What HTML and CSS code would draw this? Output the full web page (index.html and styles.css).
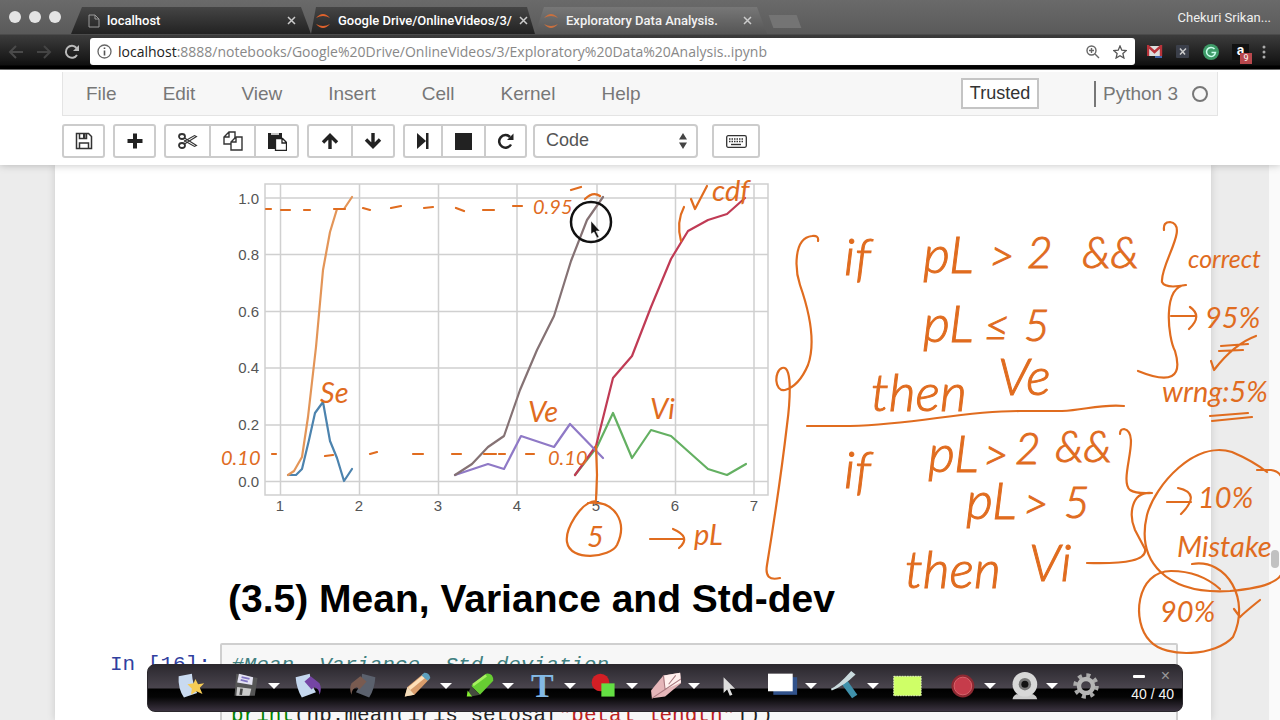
FILE: index.html
```
<!DOCTYPE html>
<html lang="en">
<head>
    <meta charset="UTF-8">
    <meta name="viewport" content="width=device-width, initial-scale=1.0">
    <title>Exploratory Data Analysis.</title>
    <link rel="stylesheet" href="styles.css">
</head>
<body>

<header class="browser">
    <div class="tabs">
        <div class="lights"><i></i><i></i><i></i></div>
        <div class="tab first">
            <svg width="12" height="14" viewBox="0 0 12 14"><path d="M1 1h6l4 4v8H1zM7 1v4h4" fill="none" stroke="#999"/></svg>
            <span>localhost</span>
            <button class="close" aria-label="Close tab"><svg width="9" height="9" viewBox="0 0 9 9"><path d="M1 1l7 7M8 1L1 8" stroke="#ccc" stroke-width="1.500"/></svg></button>
        </div>
        <div class="tab second">
            <svg width="16" height="16" viewBox="0 0 16 16" fill="#e0622c"><path d="M1 5Q8-3 15 5Q8 1 1 5zM1 11Q8 19 15 11Q8 15 1 11z"/></svg>
            <span>Google Drive/OnlineVideos/3/</span>
            <button class="close" aria-label="Close tab"><svg width="9" height="9" viewBox="0 0 9 9"><path d="M1 1l7 7M8 1L1 8" stroke="#ccc" stroke-width="1.500"/></svg></button>
        </div>
        <div class="tab active">
            <svg width="16" height="16" viewBox="0 0 16 16" fill="#c9703f"><path d="M1 5Q8-3 15 5Q8 1 1 5zM1 11Q8 19 15 11Q8 15 1 11z"/></svg>
            <span>Exploratory Data Analysis.</span>
            <button class="close" aria-label="Close tab"><svg width="9" height="9" viewBox="0 0 9 9"><path d="M1 1l7 7M8 1L1 8" stroke="#ccc" stroke-width="1.500"/></svg></button>
        </div>
        <button class="newtab" aria-label="New tab"></button>
        <span class="profile">Chekuri Srikan...</span>
    </div>
    <div class="navbar">
        <button class="nav" aria-label="Back"><svg width="16" height="14" viewBox="0 0 16 14"><path d="M15 7H2M8 1L2 7l6 6" fill="none" stroke="#4a4a4a" stroke-width="2"/></svg></button>
        <button class="nav" aria-label="Forward"><svg width="16" height="14" viewBox="0 0 16 14"><path d="M1 7h13M8 1l6 6-6 6" fill="none" stroke="#444" stroke-width="2"/></svg></button>
        <button class="nav" aria-label="Reload"><svg width="16" height="16" viewBox="0 0 16 16"><path d="M13 11A6 6 0 1 1 12.500 4" fill="none" stroke="#bbb" stroke-width="2"/><path d="M15 1v6H9z" fill="#bbb"/></svg></button>
        <div class="address">
            <svg width="15" height="15" viewBox="0 0 15 15"><circle cx="7.500" cy="7.500" r="6.500" fill="none" stroke="#666" stroke-width="1.300"/><path d="M7.500 6.500v5M7.500 3.500v1.600" stroke="#555" stroke-width="1.600"/></svg>
            <span class="url"><b>localhost</b>:8888/notebooks/Google%20Drive/OnlineVideos/3/Exploratory%20Data%20Analysis..ipynb</span>
            <svg width="14" height="14" viewBox="0 0 14 14" fill="none" stroke="#666" stroke-width="1.400"><circle cx="5.500" cy="5.500" r="4.500"/><path d="M9 9l4 4M3 5.500h5M5.500 3v5"/></svg>
            <svg width="14" height="14" viewBox="0 0 14 14"><path d="M7 1l1.800 4.200 4.500.4-3.400 3 1 4.400L7 10.700 3.100 13l1-4.400-3.400-3 4.500-.4z" fill="none" stroke="#555" stroke-width="1.300"/></svg>
        </div>
        <div class="extensions">
            <svg width="16" height="14" viewBox="0 0 16 14"><path d="M1 1h13v10H1z" fill="#ddd"/><path d="M1 11V1l6.500 6L14 1v10" fill="none" stroke="#b8333a" stroke-width="2.400"/><path d="M8 11h7v2H8z" fill="#46a"/></svg>
            <svg width="14" height="14" viewBox="0 0 14 14"><rect width="13" height="13" rx="1" fill="#3b3f4a"/><path d="M4 3.500l5 6M10 3.500l-6 6" stroke="#ccc" stroke-width="1.500"/></svg>
            <svg width="16" height="16" viewBox="0 0 16 16"><circle cx="8" cy="8" r="8" fill="#3e9b68"/><path d="M11.500 5A4.500 4.500 0 1 0 12.500 8.500H8.500" fill="none" stroke="#cfe" stroke-width="1.500"/></svg>
            <div class="amazon">a<span class="badge">9</span></div>
            <svg width="4" height="14" viewBox="0 0 4 14" fill="#aaa"><circle cx="2" cy="2" r="1.500"/><circle cx="2" cy="7" r="1.500"/><circle cx="2" cy="12" r="1.500"/></svg>
        </div>
    </div>
</header>

<div class="jupyter">
    <nav class="menubar">
        <a href="#">File</a>
        <a href="#">Edit</a>
        <a href="#">View</a>
        <a href="#">Insert</a>
        <a href="#">Cell</a>
        <a href="#">Kernel</a>
        <a href="#">Help</a>
        <button class="trusted">Trusted</button>
        <span class="kernel">Python 3</span>
        <i class="idle"></i>
    </nav>
    <div class="toolbar">
        <div class="group"><button class="w43" aria-label="Save"><svg width="18" height="18" viewBox="0 0 18 18"><path d="M1.500 1.500h12l3 3v12h-15zM4.500 1.500v5h7v-5M4.500 16.500v-5.500h9v5.500" fill="none" stroke="#333" stroke-width="1.500"/><path d="M8 2h2.500v4H8z" fill="#333"/></svg></button></div>
        <div class="group"><button class="w43" aria-label="Insert cell"><svg width="16" height="16" viewBox="0 0 16 16"><path d="M8 .5v15M.5 8h15" stroke="#222" stroke-width="4"/></svg></button></div>
        <div class="group">
            <button class="w45" aria-label="Cut"><svg width="20" height="18" viewBox="0 0 20 18" fill="none" stroke="#333"><ellipse cx="4" cy="4.500" rx="3" ry="2.500" stroke-width="1.800"/><ellipse cx="4" cy="13.500" rx="3" ry="2.500" stroke-width="1.800"/><path d="M6.500 6l12 7.500-2 1L6 8.500M6.500 12l12-7.500-2-1L6 9.500" stroke-width="1.100"/></svg></button>
            <button class="w45" aria-label="Copy"><svg width="20" height="20" viewBox="0 0 20 20" fill="#fff" stroke="#333" stroke-width="1.400"><path d="M6 1h6v12H1V6zM6 1v5H1"/><path d="M13 6h6v13H8v-8zM13 6v5H8"/></svg></button>
            <button class="w45" aria-label="Paste"><svg width="20" height="20" viewBox="0 0 20 20"><path d="M1 2h14v16H1z" fill="#222"/><path d="M4 3h8" stroke="#fff" stroke-width="1.500"/><path d="M8.500 7.500h7l4 4v8h-11zM15 7.500v4.500h4.500" fill="#fff" stroke="#222" stroke-width="1.300"/></svg></button>
        </div>
        <div class="group">
            <button class="w44" aria-label="Move up"><svg width="18" height="16" viewBox="0 0 18 16"><path d="M9 16V3M2 9.500L9 2.500l7 7" fill="none" stroke="#222" stroke-width="3.400"/></svg></button>
            <button class="w44" aria-label="Move down"><svg width="18" height="16" viewBox="0 0 18 16"><path d="M9 0v13M2 6.500l7 7 7-7" fill="none" stroke="#222" stroke-width="3.400"/></svg></button>
        </div>
        <div class="group">
            <button class="w38" aria-label="Run"><svg width="12" height="16" viewBox="0 0 12 16"><path d="M0 0l9 8-9 8zM9 0h2.500v16H9z" fill="#222"/></svg></button>
            <button class="w43" aria-label="Stop"><svg width="17" height="17" viewBox="0 0 17 17"><path d="M0 0h17v17H0z" fill="#222"/></svg></button>
            <button class="w43" aria-label="Restart"><svg width="17" height="17" viewBox="0 0 17 17"><path d="M14 11.500A6.300 6.300 0 1 1 13 4" fill="none" stroke="#222" stroke-width="2.500"/><path d="M16.500.5v6.500H10z" fill="#222"/></svg></button>
        </div>
        <div class="celltype">
            <select aria-label="Cell type"><option>Code</option><option>Markdown</option></select>
            <svg width="8" height="16" viewBox="0 0 8 16"><path d="M0 6.500L4 0l4 6.500zM0 9.500h8L4 16z" fill="#444"/></svg>
        </div>
        <button class="keys" aria-label="Command palette"><svg width="21" height="13" viewBox="0 0 21 13"><rect x=".7" y=".7" width="19.600" height="11.600" rx="1.500" fill="none" stroke="#333" stroke-width="1.300"/><path d="M3 4h15M3 6.500h15" stroke="#333" stroke-width="1.400" stroke-dasharray="1.500 1"/><path d="M5 9.500h10" stroke="#333" stroke-width="1.400"/></svg></button>
    </div>
</div>

<main class="site">
    <div class="notebook">
        <!-- pdf / cdf of petal length -->
        <svg class="plot" width="560" height="350" viewBox="220 170 560 350">
            <g fill="none" stroke="#d0d0d0" stroke-width="1.500">
                <path d="M265 184H768V495H265z"/>
                <path d="M280.500 184V495M359.500 184V495M438.500 184V495M517 184V495M597 184V495M675.500 184V495M754 184V495"/>
                <path d="M265 198H768M265 254.500H768M265 311.500H768M265 368H768M265 425H768M265 481.500H768"/>
            </g>
            <g class="ticks" text-anchor="end">
                <text x="259" y="204">1.0</text>
                <text x="259" y="260">0.8</text>
                <text x="259" y="317">0.6</text>
                <text x="259" y="373">0.4</text>
                <text x="259" y="430">0.2</text>
                <text x="259" y="487">0.0</text>
            </g>
            <g class="ticks" text-anchor="middle">
                <text x="280" y="511">1</text>
                <text x="359" y="511">2</text>
                <text x="438" y="511">3</text>
                <text x="517" y="511">4</text>
                <text x="596" y="511">5</text>
                <text x="675" y="511">6</text>
                <text x="754" y="511">7</text>
            </g>
            <g fill="none" stroke-width="2.200" stroke-linejoin="round" stroke-linecap="round">
                <path stroke="#4c83ae" d="M288 475H296L302 469L309 440L315 413L323 402L330 441L337 458L344 481L352 469"/>
                <path stroke="#e39558" d="M288 475L294 471L302 457L308 417L316 347L323 270L330 232L337 209H344L352 197"/>
                <path stroke="#64b062" d="M575 475L597 447L613 413L632 458L651 430L671 436L708 469L727 475L746 464"/>
                <path stroke="#c03b55" d="M575 475L596 446L613 378L632 356L651 307L671 259L688 231L708 220L727 214L745 198"/>
                <path stroke="#8f79c6" d="M455 475L488 464L504 469L521 436L554 447L570 424L603 458"/>
                <path stroke="#857274" d="M455 475L472 464L488 447L504 436L520 390L537 350L554 316L571 261L587 220L603 197"/>
            </g>
        </svg>
        <h2>(3.5) Mean, Variance and Std-dev</h2>
        <div class="cell">
            <div class="prompt">In [16]:</div>
<pre class="input"><i>#Mean, Variance, Std-deviation</i>
<b>print</b>("Means:")
<b>print</b>(np.mean(iris_setosa[<em>"petal_length"</em>]))</pre>
        </div>
    </div>
    <div class="scrollbar"><i></i></div>
</main>

<!-- pen layer over the notebook -->
<svg class="ink" width="1280" height="720" viewBox="0 0 1280 720">
    <g class="pen">
        <path d="M266 209h5M281 210h9M304 210h6M334 209h11M363 208l7 2M391 208l10-2M424 208l9-1M456 208l8 3M483 210h11M513 206h9M571 190l10-3M585 199q8-8 15-3"/>
        <path d="M272 454h4M325 456l8-1M370 454l7-2M413 454h10M452 454h9M484 454h12M499 454h6M526 454h8"/>
        <path d="M596 446L597 475L596 500M596 501C580 502 565 530 567 542C570 562 610 558 617 545C628 522 615 500 588 503"/>
        <path d="M650 539H684M673 529Q692 537 679 548"/>
        <path d="M681 241Q676 222 684 207M691 199L695 209L707 186"/>
        <path d="M818 241Q819 235 812 236C793 238 795 270 800 285C814 325 814 348 808 365Q799 386 785 390C774 392 774 371 782 368C794 364 789 410 787 425Q780 485 767 565Q764 582 780 578"/>
        <path d="M807 426H850C920 424 960 411 1020 411H1062C1085 410 1100 404 1124 406"/>
        <path d="M1164 230Q1163 222 1170 222C1190 225 1160 265 1162 282Q1165 289 1186 285C1162 286 1168 338 1175 351Q1187 391 1138 371M1171 316H1195M1190 307Q1203 316 1189 329"/>
        <path d="M1221 346L1248 344M1219 351L1243 350M1211 361L1214 370Q1234 344 1256 336M1210 416L1248 413M1212 421L1252 417"/>
        <path d="M1120 434Q1120 429 1124 429C1142 433 1118 480 1130 490Q1136 494 1152 493C1130 491 1129 516 1135 530L1145 549Q1148 565 1087 563"/>
        <path d="M1257 470H1271Q1279 471 1282 478M1267 472Q1253 461 1232 452C1195 440 1155 485 1147 515C1136 561 1166 595 1230 591Q1277 587 1282 573"/>
        <path d="M1167 502H1191M1178 488Q1202 493 1181 514"/>
        <path d="M1220 589Q1200 571 1171 571C1136 571 1131 622 1150 641C1166 659 1216 656 1233 637C1251 600 1227 558 1192 564M1234 609L1240 617Q1245 612 1260 600"/>
    </g>
    <g class="words">
        <text class="m" x="320" y="403">Se</text>
        <text class="s" x="221" y="465">0.10</text>
        <text class="s" x="548" y="465">0.10</text>
        <text class="s" x="533" y="214">0.95</text>
        <text class="m" x="528" y="422">Ve</text>
        <text class="m" x="650" y="419">Vi</text>
        <text class="m" x="712" y="201">cdf</text>
        <text class="m" x="587" y="547">5</text>
        <text class="m" x="694" y="545">pL</text>
        <text class="xl" x="844" y="275">if</text>
        <text class="xl" x="923" y="273">pL</text>
        <text class="l" x="989" y="271">&gt;</text>
        <text class="l" x="1027" y="268">2</text>
        <text class="l" x="1082" y="268">&amp;&amp;</text>
        <text class="xl" x="923" y="342">pL</text>
        <text class="l" x="984" y="341">≤</text>
        <text class="l" x="1024" y="341">5</text>
        <text class="xl" x="871" y="411">then</text>
        <text class="xl" x="998" y="395">Ve</text>
        <text class="xl" x="844" y="488">if</text>
        <text class="xl" x="928" y="472">pL</text>
        <text class="l" x="983" y="470">&gt;</text>
        <text class="l" x="1015" y="464">2</text>
        <text class="l" x="1055" y="462">&amp;&amp;</text>
        <text class="xl" x="966" y="519">pL</text>
        <text class="l" x="1023" y="519">&gt;</text>
        <text class="l" x="1064" y="518">5</text>
        <text class="xl" x="905" y="588">then</text>
        <text class="xl" x="1029" y="581">Vi</text>
        <text class="r" x="1188" y="268">correct</text>
        <text class="m" x="1205" y="328">95%</text>
        <text class="m" x="1162" y="402">wrng:5%</text>
        <text class="m" x="1198" y="508">10%</text>
        <text class="m" x="1177" y="557">Mistake</text>
        <text class="m" x="1160" y="622">90%</text>
    </g>
    <circle cx="591" cy="222" r="20" fill="none" stroke="#111" stroke-width="2.500"/>
    <path d="M591 221v13l3-2 3 6 2-1-3-6h4z" fill="#111" stroke="#fff" stroke-width=".5"/>
</svg>

<div class="palette">
    <button class="tool" aria-label="New page"><svg width="34" height="34" viewBox="0 0 34 34"><path d="M3 6l15-3q1 12 6 22L9 30Q2 20 3 6z" fill="#c9daf0"/><path d="M22 9l3 6 7-1-5 5 3 7-7-3-6 4 1-7-5-5 7-1z" fill="#f7cc55"/></svg></button>
    <button class="tool more" aria-label="Save"><svg width="34" height="34" viewBox="0 0 34 34"><path d="M6 3l24 5-3 20H4z" fill="#555"/><path d="M9 3l16 4-1 9L7 13z" fill="#e4e3f2"/><path d="M12 7l9 2M11 10l8 2" stroke="#8275c2" stroke-width="2"/><path d="M7 18l16 2-2 8H6z" fill="#ccc"/><path d="M12 20l-1 7" stroke="#444" stroke-width="3"/></svg></button>
    <button class="tool" aria-label="Undo"><svg width="34" height="34" viewBox="0 0 34 34"><path d="M3 7l16-4q1 12 7 21L10 30Q4 20 3 7z" fill="#c4d7ee"/><path d="M13 12l7-6 10 8q3 6 0 13 0-7-6-9l-3 3z" fill="#7545a5"/></svg></button>
    <button class="tool" aria-label="Redo"><svg width="34" height="34" viewBox="0 0 34 34"><path d="M31 7L16 3q-1 13-7 21l15 6q6-9 7-23z" fill="#5b616d"/><path d="M21 12l-7-6-10 8q-3 6 0 13 0-7 6-9l3 3z" fill="#795b50"/></svg></button>
    <button class="tool more" aria-label="Pencil"><svg width="34" height="34" viewBox="0 0 34 34"><path d="M2 29l3-11L23 3l7 6-17 18z" fill="#d99d6c"/><path d="M7 20L24 6" stroke="#ffe0b8" stroke-width="4"/><path d="M2 29l3-11 8 9z" fill="#f4ddbb"/><path d="M21 5l3-3q6 0 7 6l-3 3z" fill="#5da0bd"/></svg></button>
    <button class="tool more" aria-label="Highlighter"><svg width="34" height="34" viewBox="0 0 34 34"><path d="M7 17L24 3q8-1 8 8L17 27z" fill="#67cd32"/><path d="M9 16L24 5" stroke="#a6f060" stroke-width="3"/><path d="M7 17l10 10-10 2-4-3z" fill="#454b3e"/><path d="M2 29l1-7 5 7z" fill="#84ee31"/></svg></button>
    <button class="tool more textool" aria-label="Text">T</button>
    <button class="tool more" aria-label="Shapes"><svg width="34" height="34" viewBox="0 0 34 34"><circle cx="13" cy="13" r="10" fill="#d31f25"/><path d="M14 14h15v15H14z" fill="#64df43"/></svg></button>
    <button class="tool more" aria-label="Eraser"><svg width="34" height="34" viewBox="0 0 34 34"><path d="M0 22L14 5l19-3 1 12-18 15-15 2z" fill="#e5b6b9"/><path d="M15 5l18-3 1 11-18 8z" fill="#fff0ee"/><path d="M14 5l2 16L1 31M16 21L34 9M20 15l8-10" fill="none" stroke="#a8797f" stroke-width="1.200"/></svg></button>
    <button class="tool" aria-label="Pointer"><svg width="34" height="34" viewBox="0 0 34 34"><path d="M12 7v18l4-4 3 7 3-1-3-7h6z" fill="#ddd"/></svg></button>
    <button class="tool more" aria-label="Whiteboard"><svg width="34" height="34" viewBox="0 0 34 34"><path d="M6 7h27v20H6z" fill="#31528b"/><path d="M0 3h28v20H0z" fill="#fff"/></svg></button>
    <button class="tool more" aria-label="Clear"><svg width="34" height="34" viewBox="0 0 34 34"><path d="M12 13l7-3 12 17-6 4z" fill="#3f91ab"/><path d="M1 20q8-3 23-20l5 4Q16 17 2 22z" fill="#c9dadd"/></svg></button>
    <button class="tool" aria-label="Select area"><svg width="34" height="34" viewBox="0 0 34 34"><rect x="2" y="6" width="31" height="22" fill="#cfff67" stroke="#eeffca" stroke-dasharray="2 1"/></svg></button>
    <button class="tool more" aria-label="Record"><svg width="34" height="34" viewBox="0 0 34 34"><circle cx="18" cy="17" r="13" fill="#8e2932"/><circle cx="18" cy="17" r="10" fill="#c63c4b" stroke="#dc6971"/></svg></button>
    <button class="tool more" aria-label="Webcam"><svg width="34" height="34" viewBox="0 0 34 34"><path d="M4 32q1-7 14-7t14 7z" fill="#ccc"/><circle cx="18" cy="15" r="14" fill="#d8d8d8"/><circle cx="18" cy="15" r="7" fill="#777"/><circle cx="18" cy="15" r="4" fill="#111"/></svg></button>
    <button class="tool" aria-label="Settings"><svg width="34" height="34" viewBox="0 0 34 34"><circle cx="17" cy="17" r="12" fill="none" stroke="#aaa" stroke-width="5" stroke-dasharray="4.500 4.925"/><circle cx="17" cy="17" r="8" fill="none" stroke="#b5b5b5" stroke-width="5"/></svg></button>
    <div class="counter">
        <div class="window"><button aria-label="Minimize"><svg width="12" height="3"><rect width="12" height="3" rx="1" fill="#fff"/></svg></button><button class="quit" aria-label="Close">×</button></div>
        <span>40 / 40</span>
    </div>
</div>

</body>
</html>
```
FILE: styles.css
```
*{
    box-sizing: border-box;
}
body{
    margin: 0;
    height: 100vh;
    overflow: hidden;
    display: flex;
    flex-direction: column;
    position: relative;
    background-color: #fff;
    font-family: "Liberation Sans", Arial, sans-serif;
}
button{
    margin: 0;
    padding: 0;
    border: 0;
    background: none;
    font-family: inherit;
    display: flex;
    align-items: center;
    justify-content: center;
}
svg{
    flex: none;
}

/* browser window */
.browser{
    flex: none;
    font-family: Roboto, sans-serif;
    background: linear-gradient(#6a6a6a, #5a5a5a 34px, #3c3c3c 35px, #111 65px, #000 66px);
    border-bottom: 1px solid #777;
}
.tabs{
    display: flex;
    height: 34px;
    padding-top: 7px;
}
.lights{
    width: 71px;
    display: flex;
    gap: 8px;
    padding: 4px 0 0 9px;
}
.lights i{
    width: 12px;
    height: 12px;
    border-radius: 50%;
    background-color: #e4e4e4;
}
.tab{
    display: flex;
    align-items: center;
    gap: 7px;
    padding: 0 15px 0 17px;
    height: 27px;
    background: linear-gradient(#454545, #222);
    color: #fff;
    font-size: 13px;
    font-weight: 500;
    white-space: nowrap;
}
.tab span{
    flex: 1;
}
.first{
    width: 240px;
    clip-path: polygon(11px 0, 230px 0, 100% 100%, 0 100%);
}
.second{
    width: 224px;
    padding-left: 4px;
    padding-right: 11px;
    clip-path: polygon(5px 0, 216px 0, 100% 100%, 0 100%);
}
.active{
    width: 232px;
    padding-left: 8px;
    background: linear-gradient(#777, #555);
    color: #f2f2f2;
    clip-path: polygon(9px 0, 222px 0, 100% 100%, 0 100%);
}
.newtab{
    width: 28px;
    height: 13px;
    margin: 8px 0 0 4px;
    background-color: #747474;
    transform: skewX(20deg);
}
.profile{
    margin-left: auto;
    padding: 3px 9px 0 0;
    font-size: 13px;
    color: #f0f0f0;
}
.navbar{
    display: flex;
    align-items: center;
    height: 35px;
    padding: 0 14px 0 8px;
}
.nav{
    width: 28px;
    justify-content: flex-start;
}
.address{
    flex: 1;
    display: flex;
    align-items: center;
    gap: 13px;
    height: 27px;
    margin-left: -2px;
    padding: 0 8px 0 7px;
    border-radius: 3px;
    background-color: #fff;
}
.url{
    flex: 1;
    margin-left: -7px;
    font-family: "Open Sans", sans-serif;
    font-size: 14px;
    color: #888;
    white-space: nowrap;
}
.url b{
    font-weight: 400;
    color: #222;
}
.extensions{
    display: flex;
    align-items: center;
    gap: 13px;
    padding-left: 12px;
}
.amazon{
    position: relative;
    width: 17px;
    height: 16px;
    background-color: #111;
    color: #fff;
    font-size: 14px;
    font-weight: 700;
    line-height: 12px;
    text-align: center;
}
.badge{
    position: absolute;
    right: -3px;
    bottom: -4px;
    width: 12px;
    height: 11px;
    background-color: #b9484d;
    color: #fff;
    font-size: 9px;
    font-weight: 400;
    line-height: 11px;
}

/* notebook header */
.jupyter{
    flex: none;
    padding: 2px 62px 7px;
    background-color: #fff;
    position: relative;
    box-shadow: 0 0 8px rgba(0, 0, 0, 0.25);
}
.menubar{
    display: flex;
    align-items: center;
    height: 44px;
    padding-right: 9px;
    background-color: #f7f7f7;
    border: 1px solid #e4e4e4;
    border-top: 0;
}
.menubar a{
    padding: 0 23px;
    font-size: 19px;
    color: #777;
    text-decoration: none;
}
.trusted{
    width: 78px;
    height: 31px;
    margin-left: auto;
    border: 2px solid #c4c4c4;
    background-color: #fff;
    font-size: 18px;
    color: #333;
}
.kernel{
    margin-left: 55px;
    padding-left: 7px;
    border-left: 2px solid #777;
    font-size: 19px;
    line-height: 26px;
    color: #777;
}
.idle{
    width: 16px;
    height: 16px;
    margin-left: 14px;
    border: 2px solid #777;
    border-radius: 50%;
}
.toolbar{
    display: flex;
    gap: 8px;
    padding-top: 8px;
}
.group{
    display: flex;
}
.group button, .keys{
    height: 34px;
    border: 2px solid #ccc;
    background-color: #fff;
}
.group button{
    border-right-width: 0;
}
.group button:first-child{
    border-radius: 3px 0 0 3px;
}
.group button:last-child{
    border-right-width: 2px;
    border-radius: 0 3px 3px 0;
}
.group button:only-child{
    border-radius: 3px;
}
.w38{
    width: 38px;
}
.w43{
    width: 43px;
}
.w44{
    width: 44px;
}
.w45{
    width: 45px;
}
.celltype{
    display: flex;
    align-items: center;
    width: 165px;
    margin-left: -2px;
    padding-right: 9px;
    border: 2px solid #ccc;
    border-radius: 4px;
}
.celltype select{
    flex: 1;
    height: 30px;
    padding: 0 0 2px 11px;
    border: 0;
    appearance: none;
    background: none;
    font-family: inherit;
    font-size: 18px;
    color: #555;
}
.keys{
    width: 48px;
    margin-left: 6px;
    border-radius: 3px;
}

/* notebook */
.site{
    flex: 1;
    min-height: 0;
    display: flex;
    padding-left: 55px;
    background-color: #ececec;
}
.notebook{
    flex: 1;
    overflow: hidden;
    padding: 5px 33px 0 55px;
    background-color: #fff;
    box-shadow: 0 0 8px rgba(0, 0, 0, 0.15);
}
.plot{
    display: block;
    margin-left: 110px;
}
.ticks{
    font-size: 15px;
    fill: #555;
}
h2{
    margin: 56px 0 0 118px;
    font-size: 39px;
    line-height: 46px;
    color: #000;
}
.cell{
    display: flex;
    margin-top: 21px;
    font-family: "Liberation Mono", "Courier New", monospace;
    font-size: 21px;
    line-height: 25px;
}
.prompt{
    width: 110px;
    padding-top: 9px;
    color: #303f9f;
    white-space: nowrap;
}
.input{
    flex: 1;
    margin: 0;
    padding: 8px 9px;
    border: 2px solid #cfcfcf;
    border-radius: 2px;
    background-color: #f7f7f7;
    font-family: inherit;
    color: #222;
}
.input i{
    color: #408080;
}
.input b{
    font-weight: 400;
    color: #008000;
}
.input em{
    font-style: normal;
    color: #ba2121;
}
.scrollbar{
    width: 69px;
    display: flex;
    justify-content: flex-end;
    background: linear-gradient(to right, transparent 58px, #fafafa 58px);
}
.scrollbar i{
    width: 8px;
    height: 18px;
    margin: 385px 1px 0 0;
    border-radius: 4px;
    background-color: #c1c1c1;
}

/* pen layer */
.ink{
    position: absolute;
    left: 0;
    top: 0;
    pointer-events: none;
}
.pen{
    fill: none;
    stroke: #e06c1f;
    stroke-width: 2.2;
    stroke-linecap: round;
    stroke-linejoin: round;
}
.words{
    fill: #e06c1f;
    font-family: Lato, sans-serif;
    font-style: italic;
}
.s{
    font-size: 20px;
}
.r{
    font-size: 25px;
}
.m{
    font-size: 29px;
}
.l{
    font-size: 44px;
}
.xl{
    font-size: 52px;
}
.l, .xl{
    font-weight: 300;
    stroke: #e06c1f;
    stroke-width: 1px;
}

/* drawing palette */
.palette{
    position: absolute;
    left: 147px;
    right: 97px;
    top: 664px;
    height: 48px;
    display: flex;
    align-items: center;
    padding: 0 8px 4px 26px;
    border: 1px solid #2b282d;
    border-radius: 8px;
    background: linear-gradient(#2b282e, #4a454e 23px, #000 24px, #050505 32px, #3b3340);
}
.tool{
    flex: none;
    width: 55px;
    height: 34px;
    justify-content: flex-start;
}
.tool svg{
    width: 30px;
    height: 30px;
    margin: 0 2px;
}
.more{
    width: 62px;
}
.more::after{
    content: "";
    margin-left: 5px;
    border: 6px solid transparent;
    border-top-color: #fff;
    border-bottom: 0;
}
.textool{
    font-family: "Liberation Serif", serif;
    font-size: 34px;
    font-weight: 700;
    color: #83b9e4;
    padding-left: 6px;
}
.textool::after{
    margin-left: 10px;
}
.counter{
    flex: none;
    margin-left: auto;
    color: #f4f4f4;
    font-size: 14px;
    line-height: 16px;
}
.window{
    display: flex;
    justify-content: space-between;
    height: 16px;
    padding: 0 4px 0 2px;
}
.window button{
    height: 12px;
}
.quit{
    color: #999;
    font-size: 16px;
}
```
